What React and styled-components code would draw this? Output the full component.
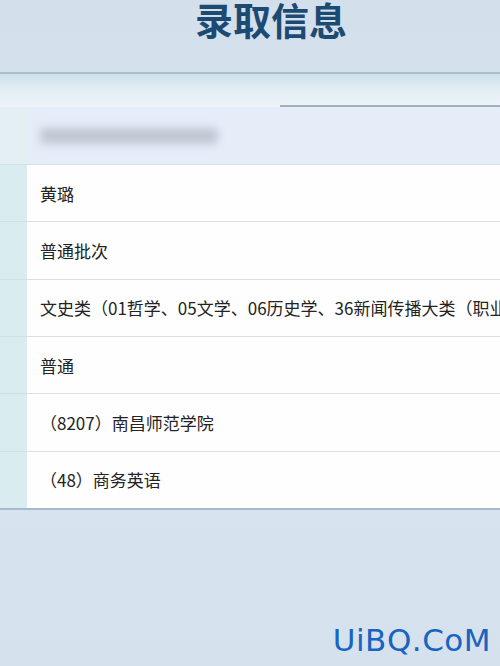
import React from "react";
import styled, { createGlobalStyle } from "styled-components";

const Global = createGlobalStyle`
  html, body { margin: 0; padding: 0; }
  body {
    width: 500px;
    height: 666px;
    overflow: hidden;
    background: #d6e2ee;
    font-family: "Noto Sans CJK SC", "Noto Sans", sans-serif;
  }
`;

const Page = styled.div`
  position: relative;
  width: 500px;
  height: 666px;
  display: flex;
  flex-direction: column;
  background: linear-gradient(180deg, #d3e0ec 0%, #d8e4ef 60%, #d5e2ee 100%);
`;

const Header = styled.div`
  height: 72px;
  display: flex;
  justify-content: center;
  padding-left: 42px;
  box-sizing: border-box;
`;

const Title = styled.h1`
  margin: 0;
  font-size: 38px;
  line-height: 38px;
  font-weight: 700;
  color: #1c4a72;
`;

const Band = styled.div`
  height: 35px;
  box-sizing: border-box;
  border-top: 2px solid #aabfcd;
  background: linear-gradient(180deg, #cfe2ec 0%, #e6f0f6 60%, #edf3f9 100%);
  display: flex;
  align-items: flex-end;
  justify-content: flex-end;
`;

const BandRule = styled.div`
  width: 220px;
  height: 2px;
  background: #9fb1bf;
`;

const Table = styled.div`
  display: grid;
  grid-template-columns: 27px 1fr;
  border-bottom: 2px solid #a7b9ca;
`;

const Side = styled.div`
  box-sizing: border-box;
  height: ${p => p.$h}px;
  background: ${p => (p.$head ? "#e4eff3" : "#d9ecef")};
  border-top: ${p => (p.$first ? "none" : "1px solid #cfdfe5")};
`;

const Cell = styled.div`
  box-sizing: border-box;
  height: ${p => p.$h}px;
  padding-left: 13px;
  display: flex;
  align-items: center;
  white-space: nowrap;
  overflow: hidden;
  font-size: 17px;
  color: #232323;
  background: ${p => (p.$head ? "#e4edf8" : "#fefefe")};
  border-top: ${p => (p.$first ? "none" : "1px solid #d8dfe8")};
`;

const Blur = styled.div`
  width: 178px;
  height: 16px;
  border-radius: 5px;
  background: #c0c7d3;
  filter: blur(4px);
`;

const Watermark = styled.div`
  position: absolute;
  right: 9px;
  bottom: 8px;
  font-family: "DejaVu Sans", "Liberation Sans", sans-serif;
  font-size: 31px;
  color: #1963c1;
  letter-spacing: 0.5px;
`;

const rows = [
  "黄璐",
  "普通批次",
  "文史类（01哲学、05文学、06历史学、36新闻传播大类（职业教育））",
  "普通",
  "（8207）南昌师范学院",
  "（48）商务英语",
];

export default function App() {
  const rh = 57.33;
  return (
    <Page>
      <Global />
      <Header>
        <Title>录取信息</Title>
      </Header>
      <Band>
        <BandRule />
      </Band>
      <Table>
        <Side $h={57} $head $first />
        <Cell $h={57} $head $first>
          <Blur />
        </Cell>
        {rows.map((t, i) => (
          <React.Fragment key={i}>
            <Side $h={rh} />
            <Cell $h={rh}>{t}</Cell>
          </React.Fragment>
        ))}
      </Table>
      <Watermark>UiBQ.CoM</Watermark>
    </Page>
  );
}
